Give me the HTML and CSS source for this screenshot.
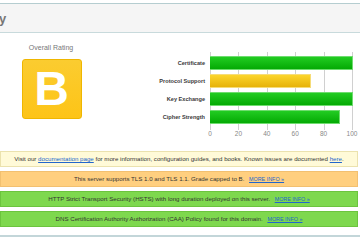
FILE: index.html
```html
<!DOCTYPE html>
<html>
<head>
	<meta charset="utf-8">
	<link rel="stylesheet" href="styles.css">
</head>
<body>
	<div class="report">
		<div class="report-title"><span class="title-text">Summary</span></div>

		<div class="summary">
			<div class="rating">
				<div class="rating-title">Overall Rating</div>
				<div class="grade">B</div>
			</div>

			<div class="chart">
				<div class="chart-labels">
					<div class="chart-label">Certificate</div>
					<div class="chart-label">Protocol Support</div>
					<div class="chart-label">Key Exchange</div>
					<div class="chart-label">Cipher Strength</div>
				</div>
				<div class="chart-body">
					<div class="plot">
						<div class="bar-row"><div class="bar bar-good" style="width: 100%"></div></div>
						<div class="bar-row"><div class="bar bar-warn" style="width: 70%"></div></div>
						<div class="bar-row"><div class="bar bar-good" style="width: 100%"></div></div>
						<div class="bar-row"><div class="bar bar-good" style="width: 90%"></div></div>
					</div>
					<div class="axis">
						<span>0</span><span>20</span><span>40</span><span>60</span><span>80</span><span>100</span>
					</div>
				</div>
			</div>
		</div>

		<div class="messages">
			<div class="msg msg-info">Visit our <a href="#">documentation page</a> for more information, configuration guides, and books. Known issues are documented <a href="#">here</a>.</div>
			<div class="msg msg-warning">This server supports TLS 1.0 and TLS 1.1. Grade capped to B. <a class="more" href="#">MORE INFO &raquo;</a></div>
			<div class="msg msg-good">HTTP Strict Transport Security (HSTS) with long duration deployed on this server. <a class="more" href="#">MORE INFO &raquo;</a></div>
			<div class="msg msg-good">DNS Certification Authority Authorization (CAA) Policy found for this domain. <a class="more" href="#">MORE INFO &raquo;</a></div>
		</div>

		<div class="report-end"></div>
	</div>
</body>
</html>
```

FILE: styles.css
```css
html, body {
	margin: 0;
	padding: 0;
	width: 100%;
	height: 100%;
	overflow: hidden;
	background: #ffffff;
	font-family: "Liberation Sans", Arial, sans-serif;
	color: #333;
}

.report {
	padding-top: 3px;
}

.report-title {
	height: 28px;
	background: #f5f5f5;
	border-top: 1px solid #b5cdd0;
	border-bottom: 1px solid #c8dadc;
	overflow: hidden;
	display: flex;
	align-items: center;
}
.title-text {
	margin-left: -53px;
	font-size: 13px;
	font-weight: bold;
	color: #777;
	white-space: nowrap;
}

/* summary row: grade on the left, chart on the right */
.summary {
	display: flex;
	height: 112px;
}
.rating {
	width: 102px;
	display: flex;
	flex-direction: column;
	align-items: center;
	padding-top: 10px;
}
.rating-title {
	font-size: 7px;
	line-height: 9px;
	color: #777;
}
.grade {
	margin-top: 7px;
	margin-left: 1px;
	width: 58px;
	height: 58px;
	border: 1px solid #efb600;
	border-radius: 3px;
	background: linear-gradient(#fbcc30, #fdc417);
	color: #ffffff;
	font-size: 48px;
	font-weight: bold;
	line-height: 58px;
	text-align: center;
}

.chart {
	display: flex;
	margin-left: auto;
	margin-right: 7px;
	padding-top: 19px;
}
.chart-labels {
	padding-top: 2px;
	margin-right: 5px;
}
.chart-label {
	height: 18px;
	line-height: 18px;
	font-size: 5.6px;
	font-weight: bold;
	color: #3a3a3a;
	text-align: right;
}
.chart-body {
	width: 143px;
}
.plot {
	padding: 2px 0 4px;
	background-image: repeating-linear-gradient(to right, #d0d0d0 0, #d0d0d0 1px, transparent 1px, transparent 28.4px);
}
.bar-row {
	height: 18px;
	display: flex;
	align-items: center;
}
.bar {
	height: 12px;
	border: 1px solid #6fdc6f;
	border-left: none;
	box-sizing: content-box;
}
.bar-good {
	background: linear-gradient(#22cc22, #04aa04);
}
.bar-warn {
	background: linear-gradient(#fcd52c, #e6b20a);
	border-color: #f6dc78;
}
.axis {
	display: flex;
	justify-content: space-between;
	width: 162px;
	margin-left: -10px;
	font-size: 6.5px;
	color: #888;
	line-height: 8px;
}
.axis span {
	width: 20px;
	text-align: center;
}

/* message boxes */
.messages {
	margin-top: 6px;
	padding: 0 2px 0 0;
}
.msg {
	height: 14px;
	line-height: 14px;
	margin-bottom: 4px;
	border: 1px solid #d8d8d8;
	font-size: 6.15px;
	text-align: center;
	white-space: nowrap;
	color: #333;
}
.msg a {
	color: #2266cc;
}
.msg .more {
	margin-left: 3px;
	font-size: 5.4px;
}
.msg-info {
	background: #fffad8;
	border-color: #ebe2ae;
}
.msg-warning {
	background: #ffcf7f;
	border-color: #f2c070;
}
.msg-good {
	background: #7ed84e;
	border-color: #6cc43e;
}

.report-end {
	margin-top: 8px;
	border-top: 2px solid #c3d6d9;
}
```
